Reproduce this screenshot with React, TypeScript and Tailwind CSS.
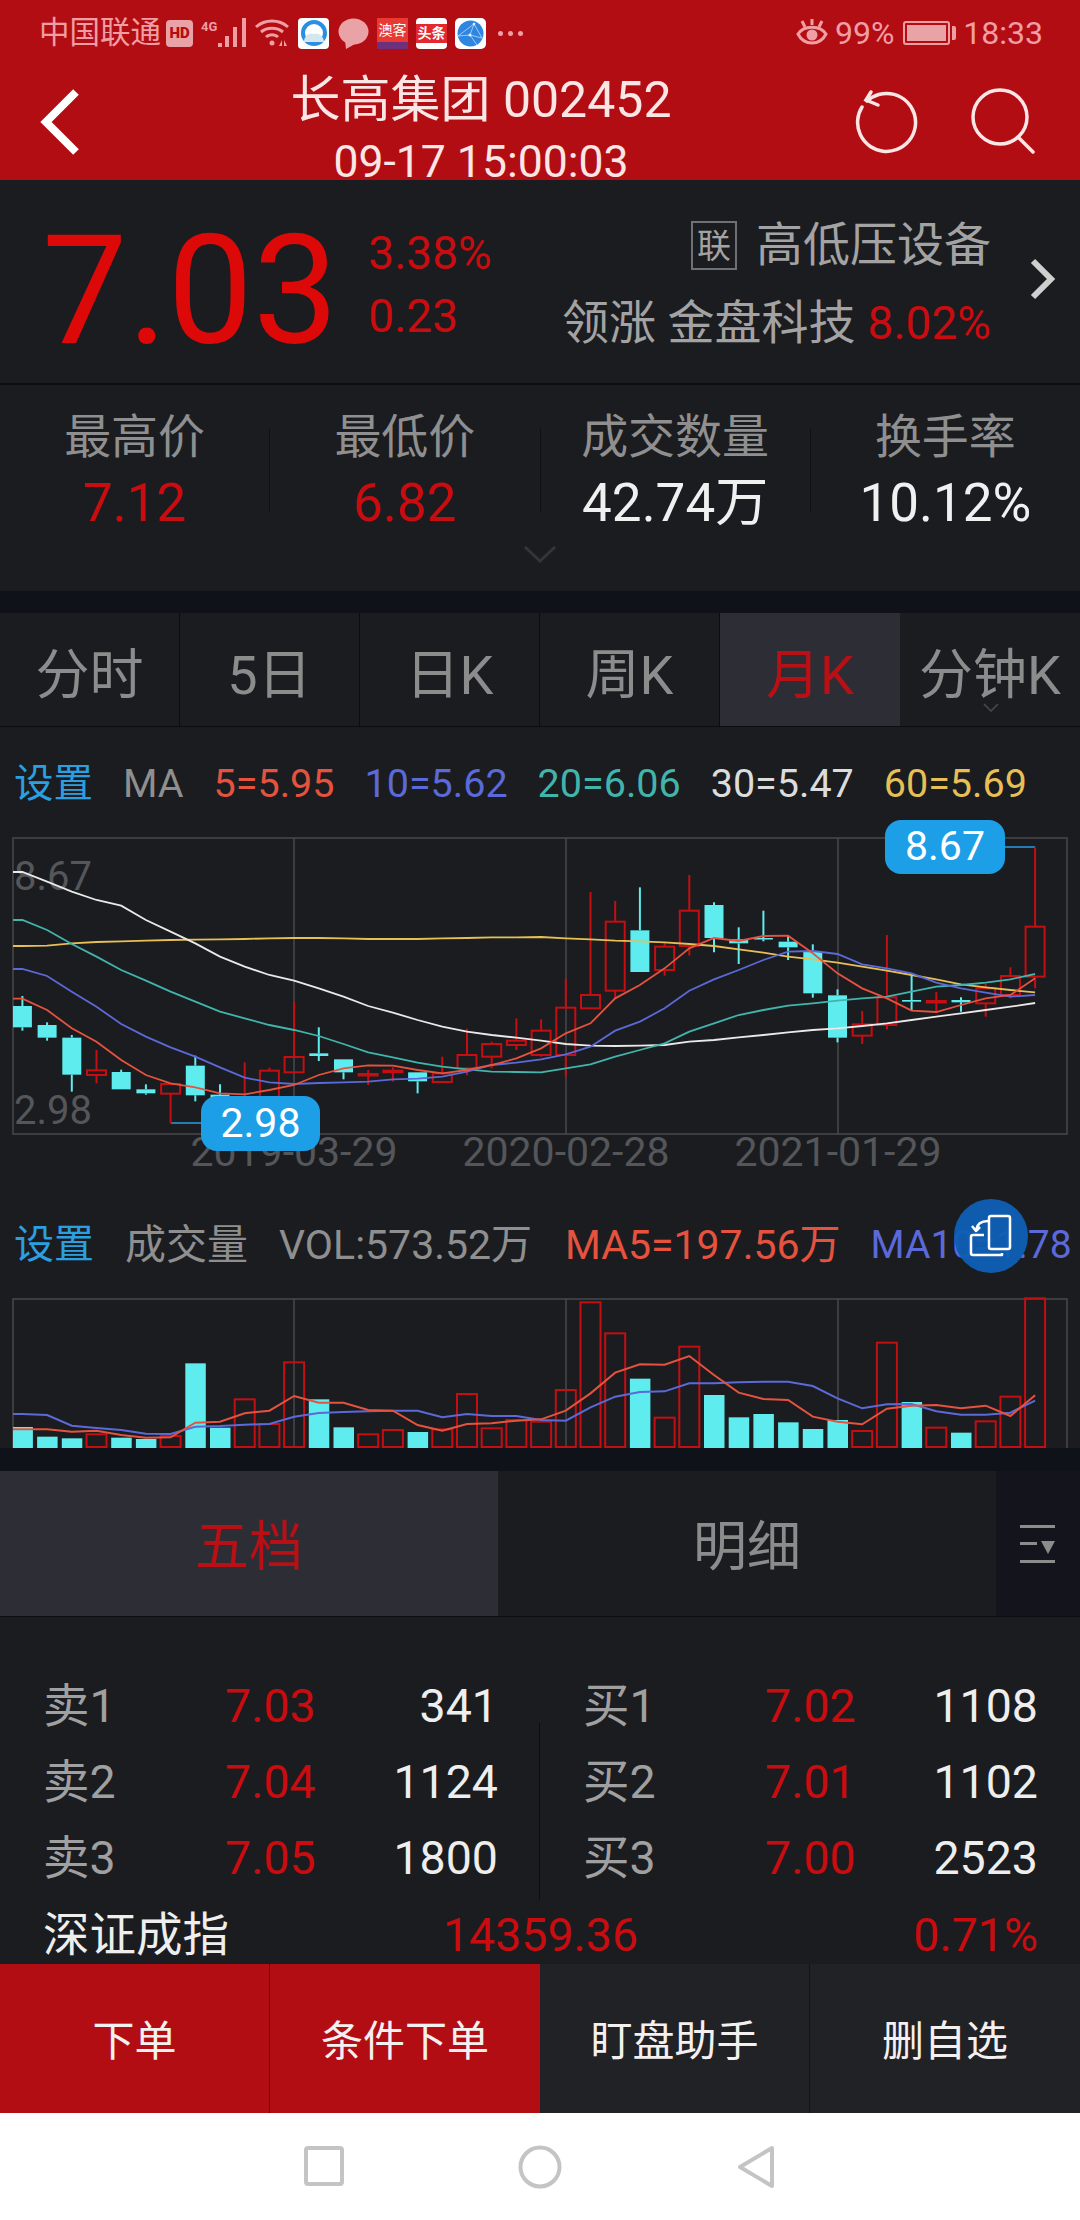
import React from 'react'

const RED = '#c40e12'
const CYAN = '#5eecee'

// x position of the i-th monthly candle / volume bar
const cx = (i: number) => 22.4 + 24.7 * i
// y values below were read off the chart, in 1/3 px steps from y=740 and y=1190
const ky = (v: number) => 740 + v / 3
const vy = (v: number) => 1190 + v / 3

// up, body top, body bottom, wick top, wick bottom
type Candle = [boolean, number, number, number, number]
const candles: Candle[] = [
  [false, 798, 862, 768, 872], [false, 855, 893, 847, 902], [false, 893, 1004, 885, 1055], [true, 991, 1005, 930, 1030],
  [false, 996, 1048, 989, 1048], [false, 1048, 1060, 1033, 1064], [true, 1032, 1061, 1032, 1150], [false, 977, 1066, 947, 1084],
  [false, 1064, 1090, 1033, 1108], [true, 1082, 1094, 967, 1105], [true, 992, 1080, 983, 1082], [true, 951, 997, 783, 1000],
  [false, 940, 948, 862, 963], [false, 958, 997, 958, 1018], [true, 1002, 1005, 990, 1035], [true, 992, 995, 982, 1025],
  [false, 997, 1024, 997, 1060], [true, 1000, 1026, 950, 1026], [true, 945, 985, 866, 1006], [true, 912, 950, 905, 985],
  [true, 902, 915, 835, 930], [true, 872, 945, 838, 950], [true, 803, 945, 716, 1010], [true, 765, 805, 456, 805],
  [true, 545, 752, 483, 775], [false, 571, 696, 442, 696], [true, 620, 690, 605, 707], [true, 512, 618, 405, 647],
  [false, 495, 594, 487, 637], [false, 598, 610, 562, 672], [false, 594, 598, 512, 604], [false, 605, 622, 585, 660],
  [false, 635, 760, 613, 773], [false, 766, 893, 748, 907], [true, 853, 887, 813, 912], [true, 772, 855, 585, 868],
  [false, 780, 785, 705, 810], [true, 783, 787, 756, 814], [false, 780, 787, 772, 815], [true, 745, 790, 732, 830],
  [true, 708, 765, 682, 775], [true, 560, 710, 322, 745],
]

const ma5 = [776, 810, 865, 905, 960, 1005, 1030, 1042, 1060, 1063, 1050, 1035, 1005, 985, 976, 977, 990, 1000, 990, 975, 955, 925, 880, 850, 775, 735, 685, 625, 594, 603, 588, 587, 640, 700, 745, 775, 812, 816, 795, 775, 765, 715]
const ma10 = [687, 708, 755, 800, 852, 890, 922, 950, 982, 1013, 1027, 1032, 1029, 1027, 1025, 1018, 1016, 1010, 995, 975, 968, 958, 943, 920, 872, 845, 805, 752, 718, 690, 660, 635, 633, 642, 673, 685, 700, 728, 745, 758, 770, 765]
const ma20 = [540, 570, 612, 650, 690, 722, 755, 785, 815, 835, 855, 870, 888, 912, 937, 952, 968, 980, 988, 995, 996, 997, 985, 973, 950, 930, 910, 875, 850, 825, 810, 797, 790, 782, 775, 770, 755, 740, 735, 728, 718, 702]
const ma30 = [396, 425, 455, 480, 497, 540, 575, 610, 650, 680, 705, 722, 745, 770, 798, 818, 840, 860, 875, 885, 893, 902, 912, 917, 918, 917, 915, 905, 900, 892, 885, 877, 870, 865, 858, 850, 840, 830, 820, 810, 800, 789]
const ma60 = [618, 617, 610, 606, 604, 602, 600, 599, 598, 597, 595, 594, 594, 595, 597, 597, 597, 595, 594, 592, 592, 591, 595, 598, 602, 604, 607, 612, 618, 628, 638, 650, 658, 668, 680, 692, 705, 718, 733, 742, 750, 757]

// top of each volume bar
const volumes: [boolean, number][] = [
  [false, 711], [false, 740], [false, 745], [true, 733], [false, 743], [false, 747], [true, 738], [false, 520], [false, 713], [true, 628], [true, 702],
  [true, 517], [false, 628], [false, 712], [true, 733], [true, 720], [false, 726], [true, 718], [true, 612], [true, 715], [true, 690], [true, 695],
  [true, 600], [true, 337], [true, 430], [false, 566], [true, 683], [true, 470], [false, 615], [false, 682], [false, 672], [false, 697], [false, 717],
  [false, 690], [true, 723], [true, 458], [false, 636], [true, 713], [false, 728], [true, 694], [true, 620], [true, 325],
]
const volMa5 = [718, 718, 725, 722, 735, 743, 742, 698, 695, 670, 662, 618, 638, 638, 660, 662, 705, 722, 702, 700, 692, 688, 662, 610, 548, 523, 524, 498, 555, 608, 627, 630, 680, 695, 703, 656, 647, 645, 655, 647, 678, 616]
const volMa10 = [672, 675, 707, 714, 720, 731, 732, 710, 708, 704, 702, 680, 669, 666, 664, 662, 662, 682, 672, 678, 678, 690, 692, 652, 620, 606, 604, 580, 580, 577, 575, 575, 588, 625, 655, 643, 642, 664, 674, 674, 668, 632]

const linePoints = (values: number[], toY: (v: number) => number) =>
  `13,${toY(values[0])} ` + values.map((v, i) => `${cx(i)},${toY(v)}`).join(' ')

const KLineChart = () => (
  <svg width="1080" height="298" viewBox="0 837 1080 298" className="block">
    <rect x="13" y="838" width="1054" height="296" fill="none" stroke="#47484c" strokeWidth="1.5" />
    <line x1="294" y1="838" x2="294" y2="1134" stroke="#47484c" strokeWidth="1.5" />
    <line x1="566" y1="838" x2="566" y2="1134" stroke="#47484c" strokeWidth="1.5" />
    <line x1="838" y1="838" x2="838" y2="1134" stroke="#47484c" strokeWidth="1.5" />
    <polyline points="171,1123 205,1123" fill="none" stroke="#2a9de0" strokeWidth="1.5" />
    <polyline points="1000,847 1035,847" fill="none" stroke="#2a9de0" strokeWidth="1.5" />
    {candles.map(([up, top, bottom, high, low], i) => {
      const x = cx(i)
      const left = Math.max(x - 9.5, 13)
      const color = up ? RED : CYAN
      return (
        <g key={i}>
          <line x1={x} y1={ky(high)} x2={x} y2={ky(top)} stroke={color} strokeWidth="2" />
          <line x1={x} y1={ky(bottom)} x2={x} y2={ky(low)} stroke={color} strokeWidth="2" />
          <rect x={left} y={ky(top)} width={x + 9.5 - left} height={Math.max(ky(bottom) - ky(top), 1.5)} fill={up ? 'none' : color} stroke={up ? color : 'none'} strokeWidth="2" />
        </g>
      )
    })}
    <polyline points={linePoints(ma60, ky)} fill="none" stroke="#e6bf55" strokeWidth="1.8" />
    <polyline points={linePoints(ma30, ky)} fill="none" stroke="#e9e9e9" strokeWidth="1.8" />
    <polyline points={linePoints(ma20, ky)} fill="none" stroke="#41b5ab" strokeWidth="1.8" />
    <polyline points={linePoints(ma10, ky)} fill="none" stroke="#5b69d9" strokeWidth="1.8" />
    <polyline points={linePoints(ma5, ky)} fill="none" stroke="#e5533f" strokeWidth="1.8" />
  </svg>
)

const VolumeChart = () => (
  <svg width="1080" height="150" viewBox="0 1298 1080 150" className="block overflow-visible">
    <polyline points="13,1448 13,1299 1067,1299 1067,1448" fill="none" stroke="#47484c" strokeWidth="1.5" />
    <line x1="294" y1="1299" x2="294" y2="1448" stroke="#47484c" strokeWidth="1.5" />
    <line x1="566" y1="1299" x2="566" y2="1448" stroke="#47484c" strokeWidth="1.5" />
    <line x1="838" y1="1299" x2="838" y2="1448" stroke="#47484c" strokeWidth="1.5" />
    {volumes.map(([up, top], i) => {
      const x = cx(i)
      const left = Math.max(x - 10, 13)
      return up ? (
        <rect key={i} x={left} y={vy(top)} width={x + 10 - left} height={1447 - vy(top)} fill="none" stroke={RED} strokeWidth="2" />
      ) : (
        <rect key={i} x={left} y={vy(top)} width={x + 10.5 - left} height={1448 - vy(top)} fill={CYAN} />
      )
    })}
    <polyline points={linePoints(volMa10, vy)} fill="none" stroke="#5b69d9" strokeWidth="2" />
    <polyline points={linePoints(volMa5, vy)} fill="none" stroke="#e5533f" strokeWidth="2" />
  </svg>
)

const StatusBar = () => (
  <div className="flex h-[66px] items-center justify-between text-[#ef9fa3]">
    <div className="flex items-center pl-[39px]">
      <span className="w-[122px] text-[30.5px] leading-none whitespace-nowrap">中国联通</span>
      <span className="ml-[5px] flex h-[27px] w-[27px] items-center justify-center rounded-[4px] bg-[#e9a3a7] text-[15px] font-black text-[#b30d14]">HD</span>
      <svg width="50" height="32" viewBox="0 0 50 32" className="ml-[8px]">
        <text x="0" y="14" fontSize="13" fontWeight="700" fill="#ef9fa3">4G</text>
        <rect x="17" y="26" width="4" height="4" fill="#ef9fa3" />
        <rect x="24" y="19" width="4" height="11" fill="#ef9fa3" />
        <rect x="32" y="10" width="4" height="20" fill="#ef9fa3" />
        <rect x="41" y="1" width="4" height="29" fill="#ef9fa3" />
      </svg>
      <svg width="36" height="28" viewBox="0 0 36 28" className="ml-[4px]" fill="none" stroke="#ef9fa3" strokeWidth="3">
        <path d="M1 8 C10 0 24 0 33 8" />
        <path d="M6 13 C12 8 22 8 28 13" />
        <path d="M11 18 C14 15 20 15 23 18" />
        <circle cx="17" cy="24" r="2.5" fill="#ef9fa3" stroke="none" />
        <path d="M24 27 L27 21 L27 27 Z M29 21 L32 27 L29 27 Z" fill="#ef9fa3" stroke="none" />
      </svg>
      <div className="ml-[7px] flex h-[31px] w-[31px] items-center justify-center rounded-[4px] bg-white">
        <svg width="26" height="26" viewBox="0 0 26 26">
          <circle cx="13" cy="13" r="11" fill="none" stroke="#2a8fe0" strokeWidth="4" />
          <path d="M3 22 C3 15 9 12 13 14 C18 12 23 17 23 22 Z" fill="#d6e6ee" />
        </svg>
      </div>
      <svg width="31" height="31" viewBox="0 0 31 31" className="ml-[9px]">
        <ellipse cx="15.5" cy="13.5" rx="15" ry="13" fill="#e9a3a7" />
        <path d="M7 22 L8 31 L17 26 Z" fill="#e9a3a7" />
      </svg>
      <div className="ml-[8px] flex h-[31px] w-[31px] flex-col overflow-hidden bg-[#e83a33]">
        <span className="flex h-[24px] items-center justify-center text-[14px] leading-none text-white">澳客</span>
        <span className="h-[7px] bg-[#6e2f7c]" />
      </div>
      <div className="ml-[8px] flex h-[31px] w-[31px] items-center justify-center rounded-[4px] bg-white">
        <span className="w-full bg-[#e3282f] text-center text-[14px] font-bold leading-[19px] text-white">头条</span>
      </div>
      <div className="ml-[8px] flex h-[31px] w-[31px] items-center justify-center rounded-[5px] bg-white">
        <svg width="27" height="27" viewBox="0 0 27 27">
          <circle cx="13.5" cy="13.5" r="13" fill="#2f86e0" />
          <path d="M1 16 L17 4 M17 4 L13 15 M1 16 L13 15 L20 25 M17 4 L25 18 M13 15 L25 18" fill="none" stroke="#a9d0f7" strokeWidth="0.9" />
          <circle cx="13" cy="15" r="1.5" fill="#e3f0fd" />
          <circle cx="17" cy="4" r="1.3" fill="#e3f0fd" />
        </svg>
      </div>
      <div className="ml-[12px] flex gap-[5px]">
        <span className="h-[5px] w-[5px] rounded-full bg-[#ef9fa3]" />
        <span className="h-[5px] w-[5px] rounded-full bg-[#ef9fa3]" />
        <span className="h-[5px] w-[5px] rounded-full bg-[#ef9fa3]" />
      </div>
    </div>
    <div className="flex items-center pr-[37px] text-[32px] leading-none">
      <svg width="32" height="28" viewBox="0 0 32 28" fill="none" stroke="#ef9fa3" strokeWidth="3">
        <path d="M2 15 C8 6 24 6 30 15 C24 27 8 27 2 15 Z" />
        <circle cx="16" cy="16" r="5.5" fill="#ef9fa3" stroke="none" />
        <path d="M6 2 L9 8 M16 0 L16 6 M26 2 L23 8" />
      </svg>
      <span className="ml-[7px]">99%</span>
      <div className="ml-[9px] flex items-center">
        <div className="h-[24px] w-[47px] rounded-[3px] border-[2px] border-[#ef9fa3] p-[2px]">
          <div className="h-full w-full bg-[#e9a3a7]" />
        </div>
        <span className="ml-[2px] h-[14px] w-[4px] rounded-r-[2px] bg-[#ef9fa3]" />
      </div>
      <span className="ml-[7px]">18:33</span>
    </div>
  </div>
)

const Header = () => (
  <div className="flex h-[114px] items-start">
    <svg width="46" height="70" viewBox="0 0 46 70" className="ml-[38px] mt-[21px] shrink-0" fill="none" stroke="#ffffff" strokeWidth="8">
      <path d="M38 5 L8 35 L38 65" />
    </svg>
    <div className="ml-[197px] flex w-[400px] flex-col items-center text-[#fbe6e6]">
      <div className="mt-[3px] text-[50px] leading-[62px] whitespace-nowrap">长高集团 002452</div>
      <div className="mt-[6px] text-[44.5px] leading-[50px] whitespace-nowrap">09-17 15:00:03</div>
    </div>
    <svg width="66" height="70" viewBox="0 0 66 70" className="ml-[171px] mt-[23px] shrink-0" fill="none" stroke="#fbe6e6" strokeWidth="3.5" strokeLinecap="round">
      <path d="M15 12 A29 29 0 1 1 10 18" />
      <path d="M19 3 L14 11 L26 16" />
    </svg>
    <svg width="68" height="70" viewBox="0 0 68 70" className="ml-[50px] mt-[20px] shrink-0" fill="none" stroke="#fbe6e6" strokeWidth="3.5" strokeLinecap="round">
      <circle cx="32" cy="31" r="27" />
      <path d="M50 51 L65 66" />
    </svg>
  </div>
)

const Quote = () => (
  <div className="flex h-[203px] items-center">
    <div className="ml-[42px] mt-[18px] text-[152px] leading-none text-[#dd0808]">7.03</div>
    <div className="ml-[30px] mt-[6px] flex flex-col text-[46px] text-[#c80c10]">
      <span className="leading-[63px]">3.38%</span>
      <span className="leading-[63px]">0.23</span>
    </div>
    <div className="ml-auto mt-[6px] flex flex-col items-end text-[#a3a3a3]">
      <div className="flex h-[78px] items-center text-[47px]">
        <span className="mr-[19px] flex h-[49px] w-[46px] items-center justify-center border-[2px] border-[#6f7074] text-[34px] leading-none">联</span>
        高低压设备
      </div>
      <div className="flex h-[78px] items-center text-[47px] whitespace-nowrap">
        领涨 金盘科技 <span className="ml-[12px] text-[46px] text-[#c80c10]">8.02%</span>
      </div>
    </div>
    <svg width="27" height="42" viewBox="0 0 27 42" className="mb-[6px] ml-[38px] mr-[24px] shrink-0" fill="none" stroke="#cfcfcf" strokeWidth="6">
      <path d="M4 3 L22 21 L4 39" />
    </svg>
  </div>
)

const StatCell = ({ label, value, red }: { label: string; value: string; red?: boolean }) => (
  <div className="flex flex-1 flex-col items-center whitespace-nowrap">
    <span className="text-[47px] leading-[66px] text-[#8f8f8f]">{label}</span>
    <span className={red ? 'text-[53px] leading-[66px] text-[#c80c10]' : 'text-[53px] leading-[66px] text-[#f0f0f0]'}>{value}</span>
  </div>
)

const Stats = () => (
  <div className="flex h-[206px] flex-col items-center pt-[19px]">
    <div className="flex w-full items-center">
      <StatCell label="最高价" value="7.12" red />
      <span className="h-[84px] w-px bg-[#0f1014]" />
      <StatCell label="最低价" value="6.82" red />
      <span className="h-[84px] w-px bg-[#0f1014]" />
      <StatCell label="成交数量" value="42.74万" />
      <span className="h-[84px] w-px bg-[#0f1014]" />
      <StatCell label="换手率" value="10.12%" />
    </div>
    <svg width="34" height="18" viewBox="0 0 34 18" className="mt-[9px]" fill="none" stroke="#34353a" strokeWidth="3">
      <path d="M2 2 L17 16 L32 2" />
    </svg>
  </div>
)

const periodTabs = ['分时', '5日', '日K', '周K', '月K', '分钟K']

const PeriodTabs = () => (
  <div className="flex h-[114px] border-b border-[#0c0d10]">
    {periodTabs.map((tab) => (
      <div
        key={tab}
        className={
          tab === '月K'
            ? 'flex w-[180px] items-center justify-center bg-[#2c2d35] pt-[12px] text-[54px] text-[#b81015]'
            : 'relative flex w-[180px] items-center justify-center border-r border-[#0c0d10] pt-[12px] text-[54px] whitespace-nowrap text-[#8c8c8c] last:border-r-0'
        }
      >
        {tab}
        {tab === '分钟K' && (
          <svg width="16" height="9" viewBox="0 0 16 9" className="absolute bottom-[14px] left-[83px]" fill="none" stroke="#4a4b50" strokeWidth="1.5">
            <path d="M1 1 L8 8 L15 1" />
          </svg>
        )}
      </div>
    ))}
  </div>
)

const OrderRow = ({ label, price, qty }: { label: string; price: string; qty: string }) => (
  <div className="grid h-[76px] w-[455px] grid-cols-[182px_1fr_auto] items-center text-[46.5px]">
    <span className="text-[#a0a0a0]">{label}</span>
    <span className="text-[#c80c10]">{price}</span>
    <span className="text-[#eeeeee]">{qty}</span>
  </div>
)

const OrderBook = () => (
  <div className="h-[347px] pt-[52px]">
    <div className="flex items-start pl-[43px]">
      <div className="flex flex-col">
        <OrderRow label="卖1" price="7.03" qty="341" />
        <OrderRow label="卖2" price="7.04" qty="1124" />
        <OrderRow label="卖3" price="7.05" qty="1800" />
      </div>
      <span className="ml-[41px] mr-[43px] mt-[54px] h-[177px] w-px bg-[#0c0d10]" />
      <div className="flex flex-col">
        <OrderRow label="买1" price="7.02" qty="1108" />
        <OrderRow label="买2" price="7.01" qty="1102" />
        <OrderRow label="买3" price="7.00" qty="2523" />
      </div>
    </div>
    <div className="grid h-[67px] grid-cols-3 items-start pl-[43px] pr-[42px] text-[46.5px] leading-[70px]">
      <span className="text-[#eeeeee]">深证成指</span>
      <span className="text-center text-[#c80c10]">14359.36</span>
      <span className="text-right text-[#c80c10]">0.71%</span>
    </div>
  </div>
)

const BottomActions = () => (
  <div className="flex h-[149px] text-[42px] text-[#f5f0f0]">
    <div className="flex w-[270px] items-center justify-center border-r border-[#5c0a0e] bg-[#b30d14] pt-[6px]">下单</div>
    <div className="flex w-[270px] items-center justify-center bg-[#b30d14] pt-[6px]">条件下单</div>
    <div className="flex w-[270px] items-center justify-center border-r border-[#131418] bg-[#212226] pt-[6px]">盯盘助手</div>
    <div className="flex w-[270px] items-center justify-center bg-[#212226] pt-[6px]">删自选</div>
  </div>
)

const NavBar = () => (
  <div className="flex h-[107px] items-start bg-white pt-[32px]">
    <svg width="40" height="42" viewBox="0 0 40 42" className="ml-[304px]" fill="none" stroke="#c4c4c4" strokeWidth="4">
      <rect x="2" y="3" width="36" height="36" rx="2" />
    </svg>
    <svg width="44" height="44" viewBox="0 0 44 44" className="ml-[174px]" fill="none" stroke="#c4c4c4" strokeWidth="4">
      <circle cx="22" cy="22" r="19.5" />
    </svg>
    <svg width="38" height="44" viewBox="0 0 38 44" className="ml-[175px]" fill="none" stroke="#c4c4c4" strokeWidth="4" strokeLinejoin="round">
      <path d="M35 3 L3 22 L35 41 Z" />
    </svg>
  </div>
)

export default function App() {
  return (
    <div className="flex h-[2220px] w-[1080px] flex-col overflow-hidden bg-[#1b1c20] font-['Roboto','Noto_Sans_CJK_SC',sans-serif]">
      <div className="h-[180px] shrink-0 bg-[#b30d14]">
        <StatusBar />
        <Header />
      </div>

      <Quote />
      <div className="h-[2px] bg-[#0c0d10]" />
      <Stats />

      <div className="h-[22px] bg-[#10121a]" />
      <PeriodTabs />

      {/* k-line */}
      <div className="flex h-[111px] items-start gap-[30px] pl-[14px] pt-[27px] text-[39.5px] leading-[60px] whitespace-nowrap">
        <span className="text-[#2b9fe0]">设置</span>
        <span className="text-[#8f8f8f]">MA</span>
        <span className="text-[#e5533f]">5=5.95</span>
        <span className="text-[#5b69d9]">10=5.62</span>
        <span className="text-[#41b5ab]">20=6.06</span>
        <span className="text-[#dcdcdc]">30=5.47</span>
        <span className="text-[#e6bf55]">60=5.69</span>
      </div>
      <div className="relative h-[296px] shrink-0">
        <span className="absolute left-[14px] top-[15px] text-[40px] leading-[48px] text-[#55565a]">8.67</span>
        <span className="absolute left-[14px] top-[249px] text-[40px] leading-[48px] text-[#55565a]">2.98</span>
        <div className="absolute -top-px left-0">
          <KLineChart />
        </div>
        <span className="absolute left-[885px] top-[-18px] flex h-[54px] w-[120px] items-center justify-center rounded-[16px] bg-[#1d9fe8] text-[41px] text-white">8.67</span>
        <span className="absolute left-[201px] top-[258px] z-10 flex h-[55px] w-[119px] items-center justify-center rounded-[16px] bg-[#1d9fe8] text-[41px] text-white">2.98</span>
      </div>
      <div className="relative h-[36px] shrink-0 text-[41px] leading-[36px] text-[#55565a]">
        <span className="absolute left-[294px] -translate-x-1/2">2019-03-29</span>
        <span className="absolute left-[566px] -translate-x-1/2">2020-02-28</span>
        <span className="absolute left-[838px] -translate-x-1/2">2021-01-29</span>
      </div>

      {/* volume */}
      <div className="relative flex h-[129px] shrink-0 items-start pl-[14px] pt-[45px] text-[41px] leading-[60px] whitespace-nowrap">
        <span className="text-[40px] text-[#2b9fe0]">设置</span>
        <span className="ml-[31px] text-[#8f8f8f]">成交量</span>
        <span className="ml-[31px] text-[#8f8f8f]">VOL:573.52万</span>
        <span className="ml-[33px] text-[#e5533f]">MA5=197.56万</span>
        <span className="ml-[30px] text-[39px] text-[#5b69d9]">MA10=1.78</span>
        <div className="absolute left-[954px] top-[29px] flex h-[74px] w-[74px] items-center justify-center rounded-full bg-[#0f5fb5]/95">
          <svg width="46" height="46" viewBox="0 0 46 46" fill="none" stroke="#ffffff" strokeWidth="2.5" strokeLinejoin="round">
            <rect x="21" y="3" width="21" height="33" rx="2" />
            <path d="M16 22 H5 A2 2 0 0 0 3 24 V40 A2 2 0 0 0 5 42 H34 V40" />
            <path d="M20 8 C13 8 9 11 8 17 M4 13 L8 18 L12 14" />
          </svg>
        </div>
      </div>
      <div className="h-[149px] shrink-0">
        <div className="-mt-px">
          <VolumeChart />
        </div>
      </div>

      <div className="h-[23px] shrink-0 bg-[#10121a]" />
      <div className="flex h-[146px] shrink-0 border-b border-[#0c0d10]">
        <div className="flex w-[498px] items-center justify-center bg-[#2c2d35] pt-[8px] text-[54px] text-[#b81015]">五档</div>
        <div className="flex w-[498px] items-center justify-center pt-[8px] text-[54px] text-[#8c8c8c]">明细</div>
        <div className="flex w-[84px] items-center justify-center bg-[#14151c]">
          <svg width="36" height="40" viewBox="0 0 36 40" fill="#8c8c8c">
            <rect x="0" y="1" width="35" height="3" />
            <rect x="0" y="18" width="17" height="3" />
            <path d="M21 17 H35 L28 30 Z" />
            <rect x="0" y="36" width="35" height="3" />
          </svg>
        </div>
      </div>
      <OrderBook />
      <BottomActions />
      <NavBar />
    </div>
  )
}
